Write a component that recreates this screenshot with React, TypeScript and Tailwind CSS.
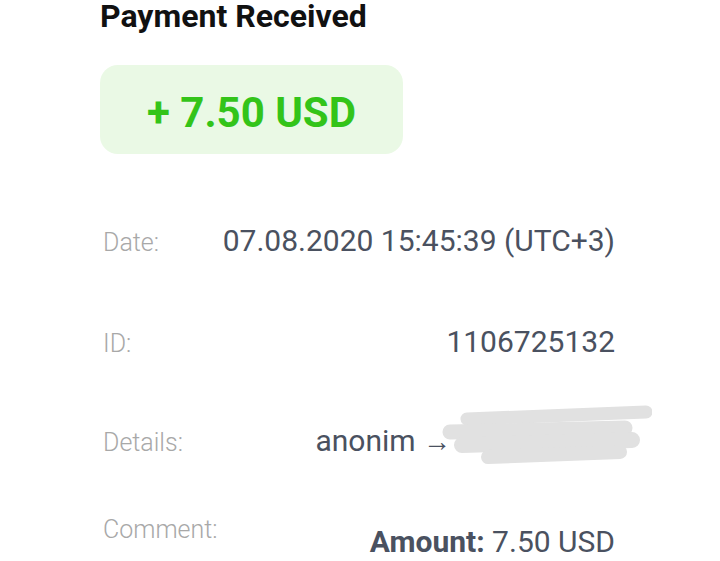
export default function App() {
  return (
    <div className="min-h-screen bg-white font-['Roboto',sans-serif]">
      <div className="w-[515px] ml-[100px]">
        <h1 className="text-[32px] leading-[32px] font-bold text-[#111111]">Payment Received</h1>

        <div className="mt-[33px] w-[303px] h-[89px] rounded-[18px] bg-[#eaf9e5] flex items-center justify-center pt-[6px]">
          <span className="text-[42px] leading-[48px] font-bold text-[#33c419]">+ 7.50 USD</span>
        </div>

        <div className="mt-[69px] flex items-baseline justify-between">
          <span className="pl-[3px] text-[25px] font-light text-[#a8a8a8]">Date:</span>
          <span className="text-[30px] leading-[36px] text-[#4a5160]">07.08.2020 15:45:39 (UTC+3)</span>
        </div>

        <div className="mt-[62px] flex items-baseline justify-between">
          <span className="pl-[3px] text-[25px] font-light text-[#a8a8a8]">ID:</span>
          <span className="text-[30px] leading-[36px] text-[#4a5160]">1106725132</span>
        </div>

        <div className="relative mt-[61px] flex items-baseline justify-between">
          <span className="pl-[3px] text-[25px] font-light text-[#a8a8a8]">Details:</span>
          <span className="text-[30px] leading-[36px] text-[#4a5160]">
            anonim <span className="text-[28px] leading-[36px]">→</span>
            <span className="inline-block w-[164px]" />
          </span>
          {/* redacted recipient */}
          <svg className="absolute right-[-37px] top-[-21px]" width="212" height="66" viewBox="0 0 212 66">
            <g stroke="#e1e1e1" strokeLinecap="round" fill="none">
              <path d="M27 17 L206 10" strokeWidth="13" />
              <path d="M10 30 L185 26" strokeWidth="15" />
              <path d="M22 43 L192 38" strokeWidth="16" />
              <path d="M48 55 L180 50" strokeWidth="14" />
            </g>
          </svg>
        </div>

        <div className="mt-[50px] flex items-start justify-between">
          <span className="pl-[3px] text-[25px] leading-[36px] font-light text-[#a8a8a8]">Comment:</span>
          <span className="mt-[15px] text-[30px] leading-[30px] text-[#4a5160]">
            <span className="font-bold">Amount:</span> 7.50 USD
          </span>
        </div>
      </div>
    </div>
  )
}
